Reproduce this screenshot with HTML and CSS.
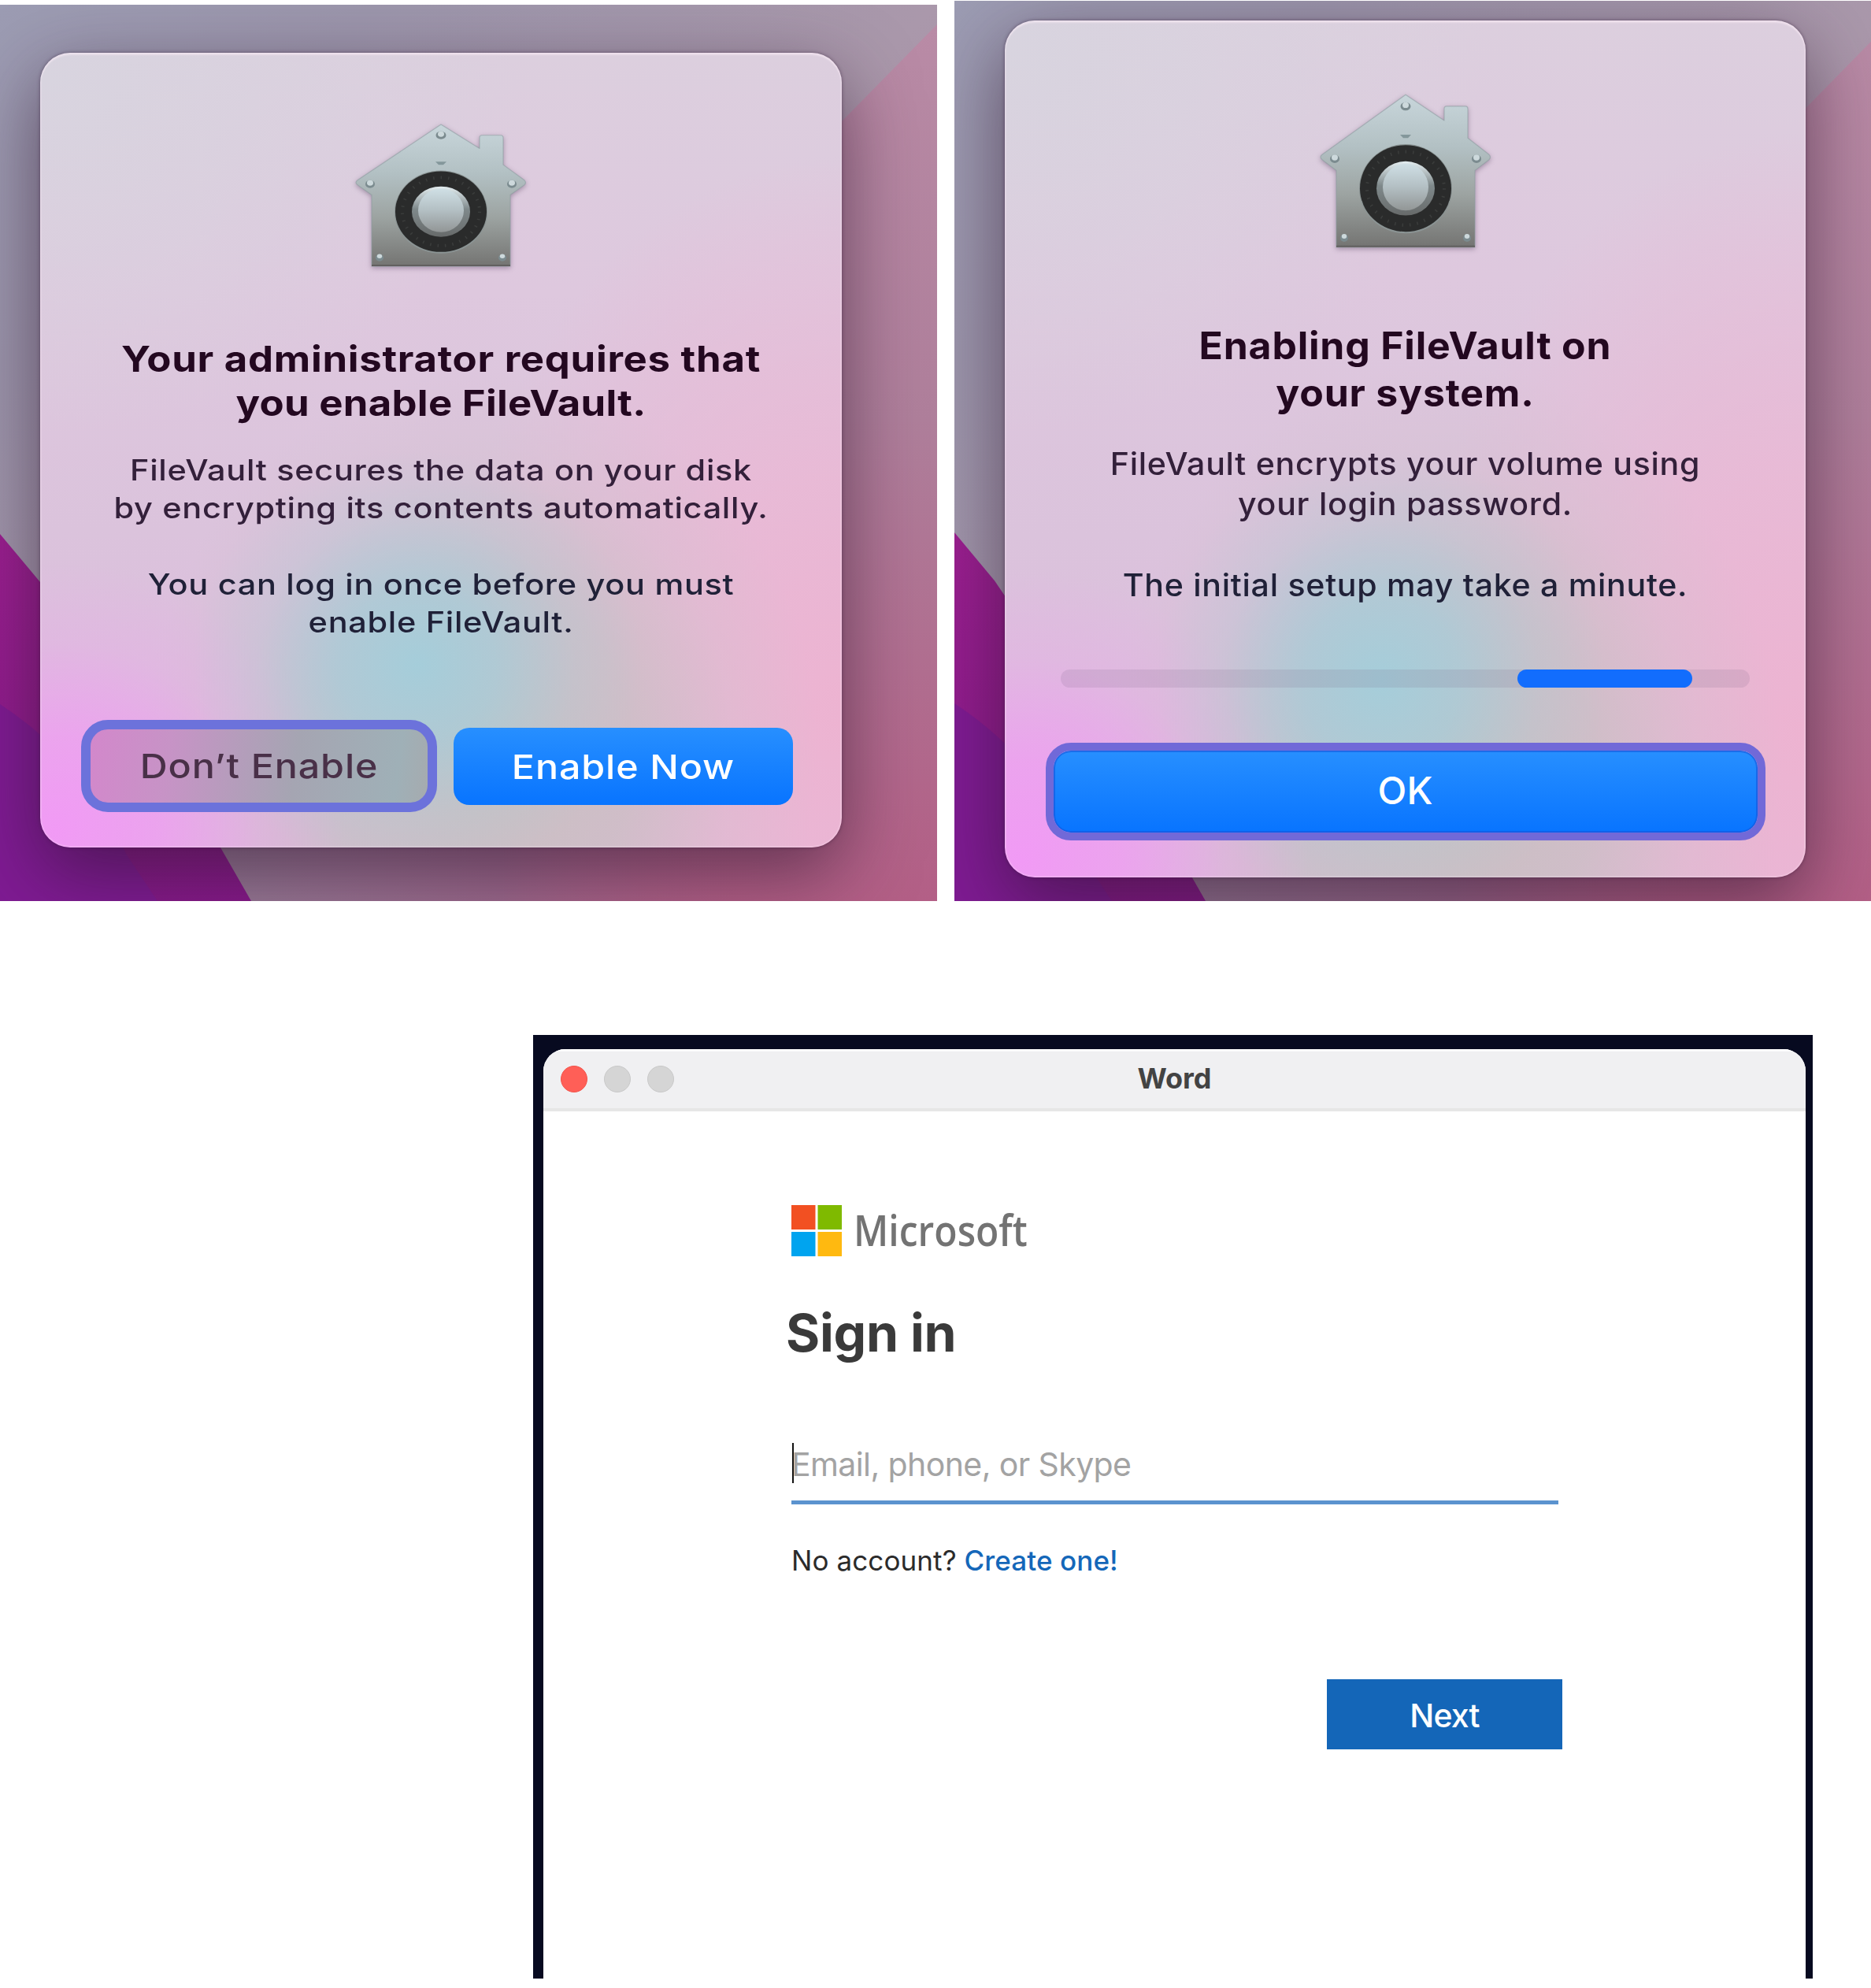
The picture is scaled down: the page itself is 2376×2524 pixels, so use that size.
FILE: index.html
```html
<!DOCTYPE html>
<html lang="en">
<head>
<meta charset="utf-8">
<title>FileVault and Word sign-in</title>
<link rel="stylesheet" href="styles.css">
</head>
<body>
<svg class="defs" aria-hidden="true">
  <defs>
    <linearGradient id="metal" x1="0" y1="0" x2="0" y2="1">
      <stop offset="0" stop-color="#c8d6db"/><stop offset=".35" stop-color="#b2c0c3"/>
      <stop offset=".65" stop-color="#9da4a2"/><stop offset="1" stop-color="#747472"/>
    </linearGradient>
    <linearGradient id="rim" x1="0" y1="0" x2="0" y2="1">
      <stop offset="0" stop-color="#e4eef1"/><stop offset=".45" stop-color="#7f898b"/><stop offset="1" stop-color="#676a6a"/>
    </linearGradient>
    <linearGradient id="knob" x1="0" y1="0" x2="0" y2="1">
      <stop offset="0" stop-color="#cfdfe5"/><stop offset=".5" stop-color="#b3bfc3"/><stop offset="1" stop-color="#929696"/>
    </linearGradient>
    <linearGradient id="sky" x1="0" y1="0" x2="1" y2="1">
      <stop offset="0" stop-color="#9c9cb3"/><stop offset=".2" stop-color="#9c96ac"/>
      <stop offset=".5" stop-color="#aa98ab"/><stop offset="1" stop-color="#a27a94"/>
    </linearGradient>
    <linearGradient id="rose" x1="0" y1="0" x2="0" y2="1">
      <stop offset="0" stop-color="#b98ba6"/><stop offset=".45" stop-color="#af7f9b"/><stop offset="1" stop-color="#b35f86"/>
    </linearGradient>
    <linearGradient id="lower" x1="0" y1="0" x2="1" y2="0">
      <stop offset="0" stop-color="#97809a"/><stop offset=".5" stop-color="#9d6a8d"/><stop offset=".85" stop-color="#aa6288" stop-opacity="0"/>
    </linearGradient>
    <linearGradient id="plum" x1="0" y1="0" x2="0" y2="1">
      <stop offset="0" stop-color="#9b1f90"/><stop offset="1" stop-color="#86198a"/>
    </linearGradient>
    <symbol id="house" viewBox="0 0 222 190" preserveAspectRatio="none">
      <path d="M111 3 L160 34 V20 Q160 17 163 17 H187 Q190 17 190 20 V55 L217 75 Q220 78 217 81 L199 94 V186 H23 V94 L5 81 Q1 78 5 75 Z" fill="url(#metal)" stroke="#8b9a9e" stroke-opacity=".55" stroke-width="1.2" stroke-linejoin="round"/>
      <path d="M23 185 H199" stroke="#62605f" stroke-width="2"/>
      <ellipse cx="111" cy="116" rx="59" ry="53.5" fill="#8b9494"/>
      <ellipse cx="111" cy="115.500" rx="58" ry="52" fill="#2a2b2b"/>
      <ellipse cx="111" cy="115.500" rx="49" ry="44" fill="none" stroke="#3b3d3c" stroke-width="4" stroke-dasharray="1.5 8"/>
      <ellipse cx="111" cy="115.500" rx="37" ry="32.500" fill="url(#rim)"/>
      <ellipse cx="111" cy="114" rx="29" ry="28" fill="url(#knob)"/>
      <path d="M104 51 H118 L114 55 H108 Z" fill="#84979b"/>
      <g fill="#7b8b8f">
        <ellipse cx="111" cy="17" rx="6.500" ry="5"/><ellipse cx="21" cy="80" rx="6" ry="5"/><ellipse cx="201" cy="80" rx="6" ry="5"/>
        <ellipse cx="33" cy="175" rx="5" ry="4.500"/><ellipse cx="189" cy="175" rx="5" ry="4.500"/>
      </g>
      <g fill="#cdd9dc">
        <ellipse cx="111" cy="15.500" rx="4" ry="3.500"/><ellipse cx="21" cy="78.500" rx="4" ry="3.500"/><ellipse cx="201" cy="78.500" rx="4" ry="3.500"/>
        <ellipse cx="33" cy="173" rx="3.200" ry="2.800"/><ellipse cx="189" cy="173" rx="3.200" ry="2.800"/>
      </g>
    </symbol>
    <symbol id="wallpaper" viewBox="0 0 1190 1138" preserveAspectRatio="none">
      <rect width="1190" height="1138" fill="url(#sky)"/>
      <path d="M1190 25 L1070 147 L640 600 V1138 H1190 Z" fill="url(#rose)"/>
      <path d="M200 1068 H1069 V1138 H200 Z" fill="url(#lower)"/>
      <path d="M0 672 L51 733 L280 1070 L319 1138 H0 Z" fill="url(#plum)"/>
      <path d="M0 888 Q110 960 160 1078 L200 1138 H0 Z" fill="#7f1b93"/>
    </symbol>
  </defs>
</svg>
<main class="page">
  <div class="screens">
    <section class="desktop desktop-request">
      <svg class="wallpaper"><use href="#wallpaper"/></svg>
      <div class="dialog dialog-request">
        <svg class="house"><use href="#house"/></svg>
        <h1 class="heading"><span>Your administrator requires that</span><span class="tight">you enable FileVault.</span></h1>
        <p class="copy"><span>FileVault secures the data on your disk</span><span>by encrypting its contents automatically.</span></p>
        <p class="copy copy-next"><span>You can log in once before you must</span><span>enable FileVault.</span></p>
        <div class="actions">
          <button class="btn btn-plain"><span>Don’t Enable</span></button>
          <button class="btn btn-blue"><span>Enable Now</span></button>
        </div>
      </div>
    </section>
    <section class="desktop desktop-progress">
      <svg class="wallpaper"><use href="#wallpaper"/></svg>
      <div class="dialog dialog-progress">
        <svg class="house"><use href="#house"/></svg>
        <h1 class="heading"><span>Enabling FileVault on</span><span>your system.</span></h1>
        <p class="copy"><span>FileVault encrypts your volume using</span><span>your login password.</span></p>
        <p class="copy copy-next"><span>The initial setup may take a minute.</span></p>
        <div class="track"><div class="bar"></div></div>
        <button class="btn btn-ok">OK</button>
      </div>
    </section>
  </div>
  <section class="word-frame">
    <div class="window">
      <header class="titlebar">
        <div class="lights"><i class="light light-close"></i><i class="light"></i><i class="light"></i></div>
        <div class="title">Word</div>
      </header>
      <form class="signin">
        <div class="brand">
          <svg class="squares" viewBox="0 0 64 64" preserveAspectRatio="none">
            <path d="M0 0h30.500v30.500H0z" fill="#f25022"/><path d="M33.500 0H64v30.500H33.500z" fill="#7fba00"/>
            <path d="M0 33.500h30.500V64H0z" fill="#00a4ef"/><path d="M33.500 33.500H64V64H33.500z" fill="#ffb910"/>
          </svg>
          <span class="brand-name">Microsoft</span>
        </div>
        <h2 class="signin-title">Sign in</h2>
        <div class="field">Email, phone, or Skype</div>
        <p class="account">No account? <a class="link">Create one!</a></p>
        <button class="next">Next</button>
      </form>
    </div>
  </section>
</main>
</body>
</html>
```
FILE: styles.css
```css
* { box-sizing: border-box; }
body, h1, h2, p { margin: 0; }
body { background: #fff; font-family: Inter, "Liberation Sans", sans-serif; }
button { border: 0; padding: 0; font-family: inherit; }
.defs { position: absolute; width: 0; height: 0; }
.page { width: 2376px; height: 2524px; overflow: hidden; }

/* FileVault desktops */
.screens { display: flex; justify-content: space-between; height: 1144px; }
.desktop { position: relative; overflow: hidden; }
.desktop-request { width: 1190px; height: 1138px; margin-top: 6px; padding: 61px 0 0 51px; }
.desktop-progress { width: 1164px; height: 1143px; margin-top: 1px; padding: 25px 0 0 64px; }
.wallpaper { position: absolute; top: 0; left: 0; width: 1190px; height: 100%; }
.dialog {
  position: relative;
  display: flex;
  flex-direction: column;
  align-items: center;
  width: 1018px;
  border-radius: 38px;
  background:
    radial-gradient(ellipse 28% 27% at 47% 77%, rgba(163, 206, 219, .95) 0%, rgba(165, 205, 218, .72) 35%, rgba(172, 204, 217, .25) 70%, rgba(180, 204, 217, 0) 100%),
    radial-gradient(ellipse 36% 34% at 2% 98%, #f19af5 0%, rgba(240, 156, 243, .75) 35%, rgba(236, 165, 236, .25) 70%, rgba(232, 170, 232, 0) 100%),
    radial-gradient(ellipse 42% 48% at 55% 88%, #c8c0c0 0%, rgba(202, 191, 196, .8) 45%, rgba(208, 192, 202, .3) 75%, rgba(212, 194, 206, 0) 100%),
    radial-gradient(ellipse 50% 70% at 100% 83%, #edb3d1 0%, rgba(236, 183, 212, .75) 45%, rgba(226, 190, 218, 0) 100%),
    radial-gradient(ellipse 60% 45% at 0% 3%, #d8d4df 0%, rgba(217, 209, 223, 0) 100%),
    linear-gradient(180deg, #dccfde 0%, #dec8de 30%, #dbc3dc 60%, #deb8de 100%);
  box-shadow:
    inset 0 3px 2px rgba(255, 240, 250, .4),
    inset 0 0 0 2px rgba(255, 235, 250, .2),
    0 0 4px rgba(50, 25, 55, .5),
    0 32px 95px rgba(45, 20, 45, .6);
}
.dialog-request { height: 1009px; padding-top: 88px; }
.dialog-progress { width: 1017px; height: 1088px; padding-top: 91px; }
.house { width: 222px; filter: drop-shadow(0 2px 3px rgba(70, 50, 80, .4)); }
.dialog-request .house { height: 187px; }
.dialog-progress .house { height: 201px; }
.heading, .copy { width: 100%; text-align: center; white-space: nowrap; color: #230820; }
.heading span, .copy span { display: block; }
.heading { font-weight: 700; }
.copy { font-weight: 500; color: #33203a; }
.copy-next { color: #202138; }

.dialog-request .heading { margin-top: 86px; font-size: 45px; line-height: 55.5px; letter-spacing: .63px; transform: scaleX(1.13); }
.dialog-request .heading .tight { letter-spacing: .25px; }
.dialog-request .copy { margin-top: 33.500px; font-size: 37px; line-height: 48.4px; letter-spacing: .62px; transform: scaleX(1.12); }
.dialog-request .copy-next { margin-top: 48.4px; }
.actions { display: flex; gap: 21px; align-self: flex-start; margin: 99px 0 0 52px; }
.btn { text-align: center; font-size: 43px; font-weight: 500; line-height: 98px; letter-spacing: .8px; }
.btn span { display: block; transform: scaleX(1.125); }
.btn-plain {
  width: 452px;
  height: 117px;
  border: 12px solid #6c72db;
  border-radius: 34px;
  background: linear-gradient(97deg, #d486cc 0%, #c793c6 25%, #a5a5b2 60%, #9fb0b7 88%, #a8a9ac 100%);
  background-origin: border-box;
  color: #493048;
  line-height: 89px;
}
.btn-blue { width: 431px; height: 98px; margin-top: 10px; border-radius: 20px; background: linear-gradient(#278fff, #0874ff); color: #fff; line-height: 92px; }

.dialog-progress .heading { margin-top: 91px; font-size: 48px; line-height: 59.5px; letter-spacing: .78px; transform: scaleX(1.04); }
.dialog-progress .copy { margin-top: 36px; font-size: 39.5px; line-height: 51.4px; letter-spacing: .7px; transform: scaleX(1.04); }
.dialog-progress .copy-next { margin-top: 51.4px; }
.track { width: 875px; height: 23px; margin-top: 80px; padding-left: 580px; border-radius: 12px; background: rgba(115, 95, 125, .14); }
.bar { width: 222px; height: 23px; border-radius: 12px; background: #126dfd; }
.btn-ok {
  width: 914px;
  height: 124px;
  margin-top: 70px;
  border: 10px solid #7169d8;
  border-radius: 32px;
  background: linear-gradient(#278fff, #0874ff) padding-box;
  box-shadow: inset 0 0 0 2px rgba(20, 85, 220, .6);
  color: #fff;
  font-size: 48px;
  letter-spacing: 0;
  line-height: 95px;
  padding-bottom: 3px;
}

/* Word window */
.word-frame { width: 1625px; height: 1198px; margin: 170px 0 0 677px; padding: 18px 9px 0 13px; background: #070a20; }
.window { height: 100%; overflow: hidden; border-radius: 28px 28px 0 0; background: #fff; }
.titlebar { display: grid; grid-template-columns: 1fr auto 1fr; align-items: center; height: 79px; padding-bottom: 2px; border-top: 3px solid #fbfbfc; border-bottom: 4px solid #e6e6e6; background: #f0f0f2; }
.lights { display: flex; gap: 21px; padding-left: 22px; }
.light { width: 34px; height: 34px; border: 1px solid #c9c9c9; border-radius: 50%; background: #d5d5d5; }
.light-close { border-color: #f2544b; background: #ff5f57; }
.title { margin-top: -2px; color: #434343; font-size: 36px; font-weight: 700; }
.signin { padding: 119px 0 0 315px; }
.brand { display: flex; align-items: center; height: 65px; }
.squares { width: 64px; height: 65px; }
.brand-name { margin: -3px 0 0 15px; font: 600 54px/65px "Open Sans", "Noto Sans", sans-serif; color: #737373; transform: scaleX(.89); transform-origin: left; }
.signin-title { margin: 57px 0 0 -7px; font-size: 66px; font-weight: 700; line-height: 80px; letter-spacing: -.3px; color: #3a3a3a; }
.field { position: relative; width: 974px; height: 78px; margin-top: 100px; border-bottom: 5px solid #5b93cf; color: #a3a3a3; font-size: 41px; line-height: 54px; letter-spacing: -.6px; }
.field::before { content: ""; position: absolute; top: 0; left: 1px; width: 2px; height: 51px; background: #111; }
.account { margin-top: 49px; color: #2b2b2b; font-size: 35px; line-height: 44px; letter-spacing: .1px; }
.link { color: #1467b9; font-weight: 500; }
.next { display: block; width: 299px; height: 89px; margin: 129px 0 0 680px; padding-top: 3px; background: #1466b8; color: #fff; font-size: 41px; font-weight: 500; letter-spacing: -.8px; }
```
